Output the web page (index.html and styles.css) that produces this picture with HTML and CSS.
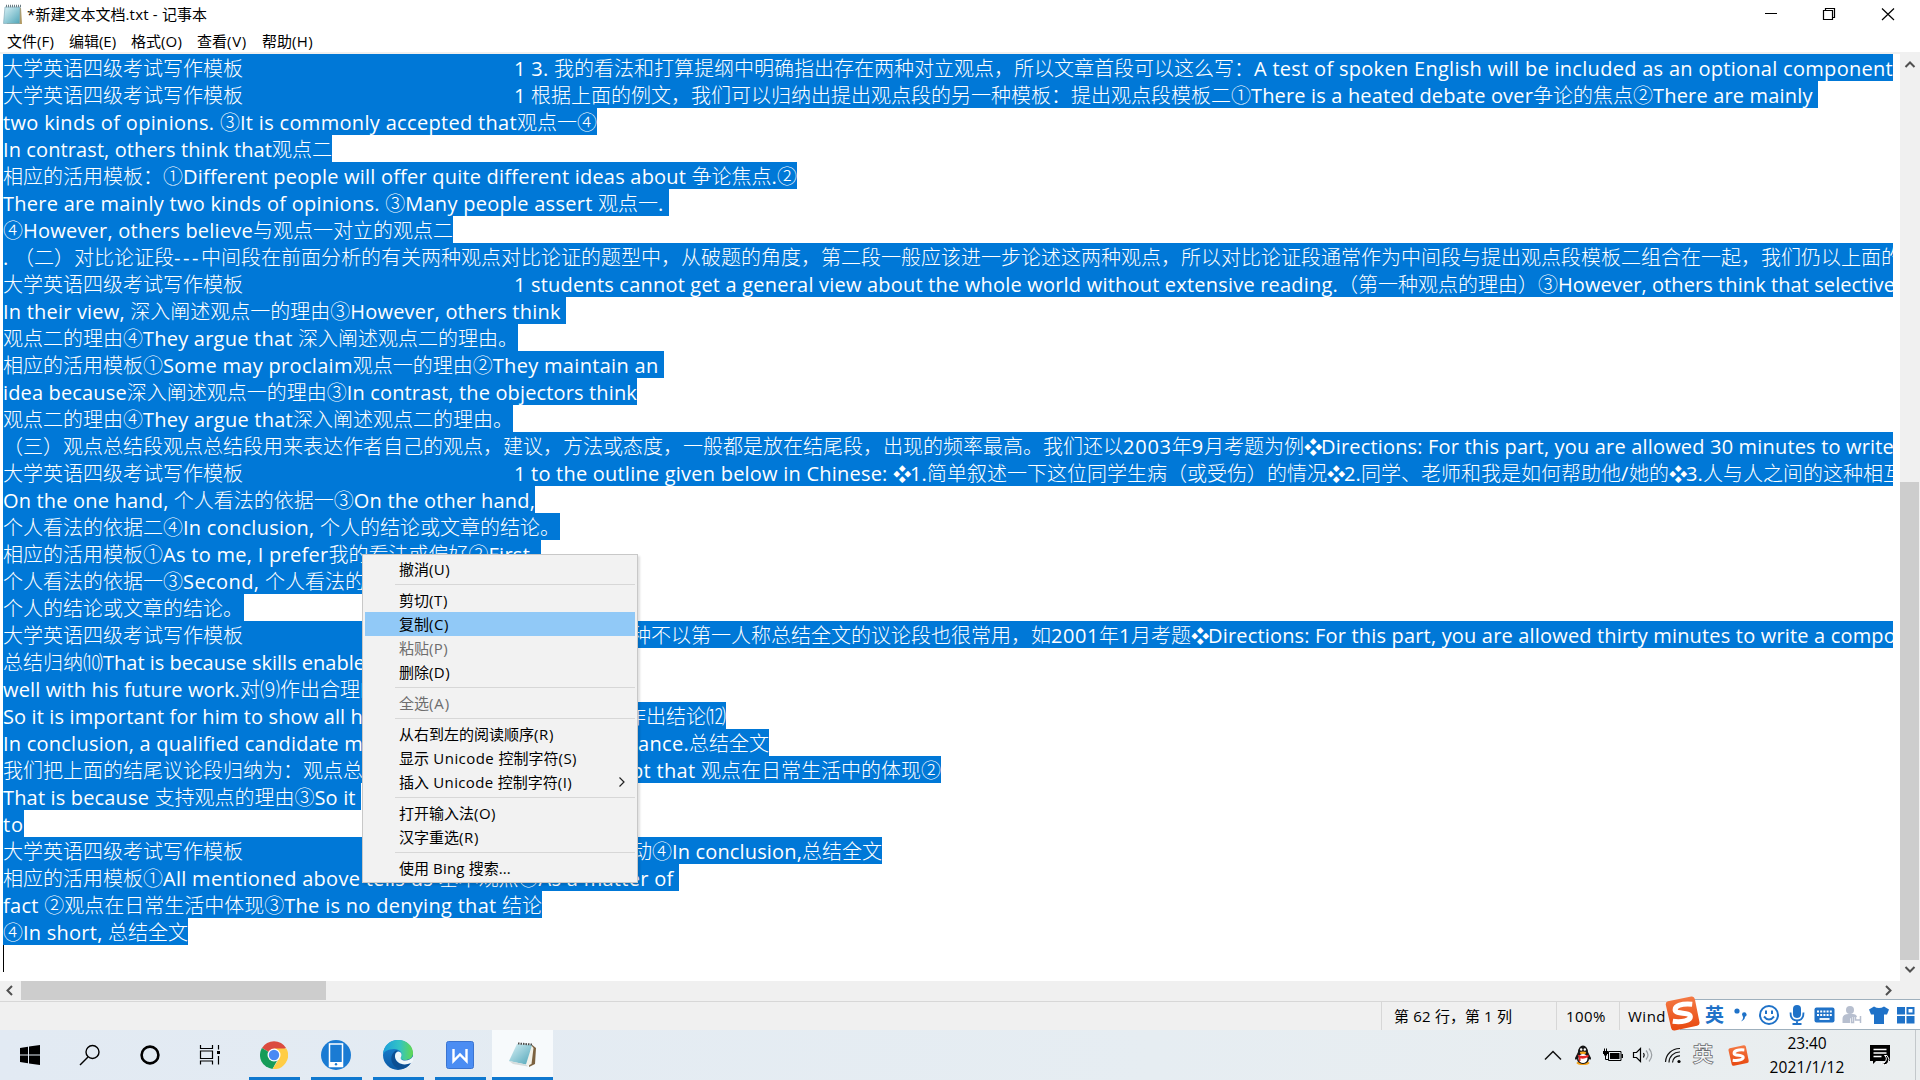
FILE: index.html
```html
<!DOCTYPE html>
<html lang="zh-CN">
<head>
<meta charset="utf-8">
<title>*新建文本文档.txt - 记事本</title>
<link rel="stylesheet" href="styles.css">
</head>
<body>
<svg class="defs" width="0" height="0">
  <defs>
    <linearGradient id="pad" x1="0" y1="0" x2="1" y2="1"><stop offset="0" stop-color="#d9f1f6"/><stop offset="1" stop-color="#4fa5b8"/></linearGradient>
    <linearGradient id="sg" x1="0" y1="0" x2="0" y2="1"><stop offset="0" stop-color="#f47a45"/><stop offset="1" stop-color="#e8480f"/></linearGradient>
    <linearGradient id="edgeTop" x1="0" y1="0" x2="1" y2="0"><stop offset="0" stop-color="#1b9fdc"/><stop offset=".55" stop-color="#33c3c5"/><stop offset="1" stop-color="#62d94f"/></linearGradient>
    <linearGradient id="edgeLow" x1="0" y1="0" x2="0" y2="1"><stop offset="0" stop-color="#1c86d6"/><stop offset="1" stop-color="#0c59a4"/></linearGradient>
    <symbol id="notepad" viewBox="0 0 28 26">
      <path d="M22 2 27 6 26 22 20 25z" fill="#7c6240"/>
      <path d="M22 3 24.500 6 22.500 22 17 24.500z" fill="#f3f1e8"/>
      <path d="M8 2 23 3 17 22.500 0 19z" fill="url(#pad)"/>
      <path d="M17 22.500 19 24.500 4 22 0 19z" fill="#d5dcdc"/>
      <path d="M9 1.500 24 2.600" stroke="#4a4a48" stroke-width="2" stroke-dasharray="1.500 1"/>
    </symbol>
    <symbol id="sogou" viewBox="0 0 36 36">
      <path d="M3 5.500 27 .500q3-.500 3.700 2.500L35.500 27q.500 3-2.500 3.700L10 35.500q-3 .500-3.700-2.500L.800 9Q.500 6 3 5.500z" fill="url(#sg)"/>
      <path d="M28 8.500C17 7.500 10 10 10.500 14.500c.500 4.500 15 2 15.500 6.500.500 4-8.500 6.500-18 5" fill="none" stroke="#fff" stroke-width="5.200"/>
    </symbol>
  </defs>
</svg>

<div class="window">
  <header class="titlebar">
    <svg class="app-icon" width="20" height="21" viewBox="0 0 20 21"><path d="M3 3 18 4 19 20 4 20z" fill="#b29a63"/><path d="M2 3H17L16.500 19.500H.500z" fill="url(#pad)" stroke="#86aebb" stroke-width=".7"/><path d="M3 2H18" stroke="#6b7d84" stroke-width="2.500" stroke-dasharray="1 1"/></svg>
    <span class="title" data-w="180">*新建文本文档.txt - 记事本</span>
    <div class="controls">
      <svg width="60" height="30" viewBox="0 0 60 30"><path d="M25 13.500H37" stroke="#000"/></svg>
      <svg width="60" height="30" viewBox="0 0 60 30"><path d="M23.500 10.500h9v9h-9zM25.500 10.500v-2h9v9h-2" fill="none" stroke="#000" stroke-width="1.200"/></svg>
      <svg width="60" height="30" viewBox="0 0 60 30"><path d="M22 8.500 34 20M34 8.500 22 20" stroke="#000" stroke-width="1.200"/></svg>
    </div>
  </header>
  <nav class="menubar">
    <span data-w="47">文件(F)</span><span data-w="47">编辑(E)</span><span data-w="51">格式(O)</span><span data-w="50">查看(V)</span><span data-w="51">帮助(H)</span>
  </nav>

  <div class="body">
    <main class="text">
      <div class="line"><span data-w="511">大学英语四级考试写作模板</span><span data-w="40">1 3. </span><span>我的看法和打算提纲中明确指出存在两种对立观点，所以文章首段可以这么写：</span><span data-w="639">A test of spoken English will be included as an optional component</span></div>
      <div class="line"><span data-w="511">大学英语四级考试写作模板</span><span data-w="17">1 </span><span>根据上面的例文，我们可以归纳出提出观点段的另一种模板：提出观点段模板二①</span><span data-w="282">There is a heated debate over</span><span>争论的焦点②</span><span data-w="165">There are mainly </span></div>
      <div class="line"><span data-w="594">two kinds of opinions. ③It is commonly accepted that观点一④</span></div>
      <div class="line"><span data-w="329">In contrast, others think that观点二</span></div>
      <div class="line"><span data-w="794">相应的活用模板：①Different people will offer quite different ideas about 争论焦点.②</span></div>
      <div class="line"><span data-w="666">There are mainly two kinds of opinions. ③Many people assert 观点一. </span></div>
      <div class="line"><span data-w="450">④However, others believe与观点一对立的观点二</span></div>
      <div class="line"><span data-w="11">. </span><span data-w="187">（二）对比论证段---</span><span>中间段在前面分析的有关两种观点对比论证的题型中，从破题的角度，第二段一般应该进一步论述这两种观点，所以对比论证段通常作为中间段与提出观点段模板二组合在一起，我们仍以上面的</span></div>
      <div class="line"><span data-w="511">大学英语四级考试写作模板</span><span data-w="824">1 students cannot get a general view about the whole world without extensive reading.</span><span>（第一种观点的理由）③</span><span data-w="337">However, others think that selective</span></div>
      <div class="line"><span data-w="563">In their view, 深入阐述观点一的理由③However, others think </span></div>
      <div class="line"><span data-w="515">观点二的理由④They argue that 深入阐述观点二的理由。</span></div>
      <div class="line"><span data-w="661">相应的活用模板①Some may proclaim观点一的理由②They maintain an </span></div>
      <div class="line"><span data-w="634">idea because深入阐述观点一的理由③In contrast, the objectors think</span></div>
      <div class="line"><span data-w="510">观点二的理由④They argue that深入阐述观点二的理由。</span></div>
      <div class="line"><span>（三）观点总结段观点总结段用来表达作者自己的观点，建议，方法或态度，一般都是放在结尾段，出现的频率最高。我们还以</span><span data-w="101">2003年9月</span><span>考题为例❖</span><span data-w="573">Directions: For this part, you are allowed 30 minutes to write</span></div>
      <div class="line"><span data-w="511">大学英语四级考试写作模板</span><span data-w="379">1 to the outline given below in Chinese: </span><span data-w="374">❖1.简单叙述一下这位同学生病（或受伤）</span><span>的情况❖</span><span data-w="17">2.</span><span data-w="308">同学、老师和我是如何帮助他/她的</span><span>❖</span><span data-w="17">3.</span><span>人与人之间的这种相互</span></div>
      <div class="line"><span data-w="532">On the one hand, 个人看法的依据一③On the other hand,</span></div>
      <div class="line"><span data-w="557">个人看法的依据二④In conclusion, 个人的结论或文章的结论。</span></div>
      <div class="line"><span data-w="538">相应的活用模板①As to me, I prefer我的看法或偏好②First, </span></div>
      <div class="line"><span data-w="362">个人看法的依据一③Second, 个人看法的</span></div>
      <div class="line"><span data-w="241">个人的结论或文章的结论。</span></div>
      <div class="line"><span data-w="628">大学英语四级考试写作模板</span><span>种不以第一人称总结全文的议论段也很常用，如</span><span data-w="80">2001年1</span><span>月考题❖</span><span data-w="688">Directions: For this part, you are allowed thirty minutes to write a compo</span></div>
      <div class="line"><span data-w="362">总结归纳⑽That is because skills enable</span></div>
      <div class="line"><span data-w="377">well with his future work.对⑼作出合理的</span></div>
      <div class="line"><span data-w="623">So it is important for him to show all h<i class="under"></i></span><span>作出结论⑿</span></div>
      <div class="line"><span data-w="635">In conclusion, a qualified candidate m<i class="under"></i></span><span data-w="51">ance.</span><span>总结全文</span></div>
      <div class="line"><span data-w="628">我们把上面的结尾议论段归纳为：观点总</span><span data-w="70">pt that </span><span>观点在日常生活中的体现②</span></div>
      <div class="line"><span data-w="358">That is because 支持观点的理由③So it </span></div>
      <div class="line"><span data-w="21">to</span></div>
      <div class="line"><span data-w="629">大学英语四级考试写作模板</span><span>动④</span><span data-w="130">In conclusion,</span><span>总结全文</span></div>
      <div class="line"><span data-w="676">相应的活用模板①All mentioned above tells us 基本观点②As a matter of </span></div>
      <div class="line"><span data-w="539">fact ②观点在日常生活中体现③The is no denying that 结论</span></div>
      <div class="line"><span data-w="185">④In short, 总结全文</span></div>
      <div class="caret"></div>
    </main>
    <div class="vscroll">
      <svg width="20" height="21" viewBox="0 0 20 21"><path d="M5.500 13 10 8.500 14.500 13" fill="none" stroke="#505050" stroke-width="2"/></svg>
      <div class="vtrack"><div class="vthumb"></div></div>
      <svg width="20" height="21" viewBox="0 0 20 21"><path d="M5.500 7 10 11.500 14.500 7" fill="none" stroke="#505050" stroke-width="2"/></svg>
    </div>
  </div>
  <div class="hscroll">
    <svg width="21" height="20" viewBox="0 0 21 20"><path d="M12 5 7.500 9.500 12 14" fill="none" stroke="#505050" stroke-width="2"/></svg>
    <div class="hthumb"></div>
    <svg class="push" width="21" height="20" viewBox="0 0 21 20"><path d="M8 5 12.500 9.500 8 14" fill="none" stroke="#505050" stroke-width="2"/></svg>
    <div class="corner"></div>
  </div>
  <footer class="status">
    <div class="cell pos"><span data-w="118">第 62 行，第 1 列</span></div>
    <div class="cell zoom"><span data-w="40">100%</span></div>
    <div class="cell eol"><span data-w="38">Wind</span></div>
  </footer>
</div>

<div class="taskbar">
  <div class="task t60"><svg width="22" height="22" viewBox="0 0 22 22"><path d="M1 4 9 2.800V10.500H1zM10 2.600 21 1V10.500H10zM1 11.500H9V19.200L1 18zM10 11.500H21V21L10 19.400z"/></svg></div>
  <div class="task t60"><svg width="22" height="22" viewBox="0 0 22 22"><circle cx="13.500" cy="8" r="6.500" fill="none" stroke="#000" stroke-width="1.400"/><path d="M9 13 1 21" stroke="#000" stroke-width="1.500"/></svg></div>
  <div class="task t60"><svg width="22" height="22" viewBox="0 0 22 22"><circle cx="11" cy="11" r="8.400" fill="none" stroke="#000" stroke-width="2.600"/></svg></div>
  <div class="task tview"><svg width="22" height="22" viewBox="0 0 22 22"><path d="M1.500 1v3.500h12V1M1.500 20.500V17h12v3.500M1.500 7h12v7.500h-12zM19.500 1v4.500M19.500 12v8.500" fill="none" stroke="#000" stroke-width="1.200"/><path d="M18 7h3v3h-3z"/></svg></div>
  <div class="task open"><svg width="28" height="28" viewBox="0 0 28 28"><path d="M14 14 2 7A14 14 0 0 1 26.100 7z" fill="#db4b3f"/><path d="M14 14 1.900 7A14 14 0 0 0 12.500 28L18 18z" fill="#159c58"/><path d="M14 7.500H26.400A14 14 0 0 1 12.500 28L19.500 17z" fill="#ffcd46"/><circle cx="14" cy="14" r="6.500" fill="#fff"/><circle cx="14" cy="14" r="5.200" fill="#4a8af4"/></svg></div>
  <div class="task open"><svg width="30" height="30" viewBox="0 0 30 30"><circle cx="15" cy="15" r="15" fill="#1a7bd3"/><path d="M8.500 4h13v22.500h-13z" fill="#1a7bd3" stroke="#fff" stroke-width="1.500"/><path d="M8.500 22h13v4.500h-13z" fill="#fff"/><circle cx="15" cy="24.300" r="1.200" fill="#1a7bd3"/></svg></div>
  <div class="task open"><svg width="30" height="30" viewBox="0 0 30 30"><circle cx="15" cy="15" r="15" fill="url(#edgeLow)"/><path d="M0 14C1 5 7 0 15 0c9 0 15 6 15 13 0 5-4 7-8 7-3 0-5-1-4-3 2-4-1-8-7-8C5 9 1 12 0 14z" fill="url(#edgeTop)"/><path d="M11 12c-5 5-3 14 5 17 6 0 10-3 12-6-9 4-17-1-16-8 0-2 1-3 3-4-2-1-3 0-4 1z" fill="#0d4f93"/><path d="M15 11.500c3 0 4.500 3 3 5.500-1 2 1 3.500 4 3.500 3.500 0 6-1.500 8-4V21l-2 2c-8 3.500-15 0-16-6-.300-3 1-5 3-5.500z" fill="#eff6fa"/></svg></div>
  <div class="task open"><svg width="28" height="28" viewBox="0 0 28 28"><rect x=".5" y=".5" width="27" height="27" rx="2" fill="#4b8df3" stroke="#3b74d0"/><path d="M7.500 8v12L14 13.500 20.500 20V8" fill="none" stroke="#fff" stroke-width="2.400"/></svg></div>
  <div class="task open active"><svg width="28" height="26"><use href="#notepad"/></svg></div>

  <div class="tray">
    <div class="ti"><svg width="18" height="12" viewBox="0 0 18 12"><path d="M1 10.500 9 2.500 17 10.500" fill="none" stroke="#111" stroke-width="1.500"/></svg></div>
    <div class="ti"><svg width="18" height="20" viewBox="0 0 18 20"><ellipse cx="9" cy="18" rx="6.500" ry="2" fill="#f5a31a"/><path d="M4 7a5 6.500 0 0 1 10 0l3 6c0 2-1 2-2 1a6 5 0 0 1-12 0c-1 1-2 1-2-1z" fill="#151515"/><ellipse cx="9" cy="13.500" rx="4.500" ry="4.500" fill="#fff"/><path d="M3.500 9.500Q9 12.500 14.500 9.500V12Q9 14.500 6.500 13.200V16H4.800V12.500z" fill="#e32626"/><ellipse cx="9" cy="7.800" rx="3.200" ry="1.300" fill="#f5a31a"/><circle cx="7.200" cy="4.500" r="1.200" fill="#fff"/><circle cx="10.800" cy="4.500" r="1.200" fill="#fff"/></svg></div>
    <div class="ti"><svg width="22" height="16" viewBox="0 0 22 16"><path d="M6.500 4.500h12.500v9H6.500z" fill="none" stroke="#000"/><path d="M8 6h9.500v6H8zM19.500 7h1.500v4h-1.500zM1 4h5v3H5v1.500H2V7H1z"/><path d="M2.500 1.500V4M4.500 1.500V4M3.500 8v4.500h3" stroke="#000" fill="none"/></svg></div>
    <div class="ti"><svg width="22" height="20" viewBox="0 0 22 20"><path d="M1.500 7.500h3l4-4v13l-4-4h-3z" fill="none" stroke="#000" stroke-width="1.200"/><path d="M11.500 8q1.500 2 0 4.500" fill="none" stroke="#000" stroke-width="1.200"/><path d="M14 5.500q4 4.500 0 9M17 3.500q5.500 6.500 0 13" fill="none" stroke="#9a9fa3" stroke-width="1.200"/></svg></div>
    <div class="ti"><svg width="18" height="18" viewBox="0 0 18 18"><circle cx="15" cy="15.500" r="1.600"/><path d="M1.500 16A14 14 0 0 1 16 2.500M5 16.500A10.500 10.500 0 0 1 16 6M8.500 16.500A7 7 0 0 1 16 9.800" fill="none" stroke="#111" stroke-width="1.200"/></svg></div>
    <div class="ti ime">英</div>
    <div class="ti last"><svg width="21" height="21"><use href="#sogou"/></svg></div>
    <div class="clock"><span data-w="39">23:40</span><span data-w="75">2021/1/12</span></div>
    <div class="notif"><svg width="22" height="22" viewBox="0 0 22 22"><path d="M1 1h20v16H7l-3 3v-3H1z"/><path d="M4.500 5.500h13M4.500 9h13M4.500 12.500h8" stroke="#fff" stroke-width="1.300"/><path d="M15.500 11.500q4 3-.5 7.500-1.500.800-3 0 3.500 3.500 7 0 2.500-4-1-7.500z" fill="#000" stroke="#fff"/></svg></div>
    <div class="peek"></div>
  </div>
</div>

<div class="context">
  <div class="item"><span data-w="51">撤消(U)</span></div>
  <div class="sep"></div>
  <div class="item"><span data-w="49">剪切(T)</span></div>
  <div class="item hot"><span data-w="50">复制(C)</span></div>
  <div class="item off"><span data-w="49">粘贴(P)</span></div>
  <div class="item"><span data-w="51">删除(D)</span></div>
  <div class="sep"></div>
  <div class="item off"><span data-w="51">全选(A)</span></div>
  <div class="sep"></div>
  <div class="item"><span data-w="155">从右到左的阅读顺序(R)</span></div>
  <div class="item"><span data-w="178">显示 Unicode 控制字符(S)</span></div>
  <div class="item"><span data-w="173">插入 Unicode 控制字符(I)</span><svg class="more" width="8" height="12" viewBox="0 0 8 12"><path d="M1.500 1.500 6 6 1.500 10.500" fill="none" stroke="#222" stroke-width="1.200"/></svg></div>
  <div class="sep"></div>
  <div class="item"><span data-w="97">打开输入法(O)</span></div>
  <div class="item"><span data-w="80">汉字重选(R)</span></div>
  <div class="sep"></div>
  <div class="item"><span data-w="112">使用 Bing 搜索...</span></div>
</div>

<div class="sogou">
  <svg class="logo" width="37" height="35"><use href="#sogou"/></svg>
  <span class="ying">英</span>
  <svg width="31" height="24" viewBox="0 0 31 24"><circle cx="13" cy="8" r="2.600" fill="#1f72c8"/><path d="M18 11.500a2.300 2.300 0 1 1 3 2.300Q21 17 17 18.500 19.500 16 19 14z" fill="#1f72c8"/></svg>
  <svg width="28" height="24" viewBox="0 0 28 24"><circle cx="14" cy="12" r="9" fill="none" stroke="#1f72c8" stroke-width="2"/><path d="M11 7.500v3.500M17 7.500v3.500M9 13.500q5 6 10 0" fill="none" stroke="#1f72c8" stroke-width="2"/></svg>
  <svg width="28" height="24" viewBox="0 0 28 24"><rect x="10" y="2" width="8" height="13" rx="4" fill="#1f72c8"/><path d="M7.500 9.500q0 8 6.500 8t6.500-8M14 17v3M9.500 21h9" fill="none" stroke="#1f72c8" stroke-width="1.800"/></svg>
  <svg width="27" height="24" viewBox="0 0 27 24"><rect x="3.500" y="4.500" width="20" height="15" rx="2" fill="#1f72c8"/><path d="M6 8.500h15.500M6 12h15.500" stroke="#fff" stroke-width="2" stroke-dasharray="2 1.200"/><path d="M8.500 16h10" stroke="#fff" stroke-width="1.800"/></svg>
  <svg width="28" height="24" viewBox="0 0 28 24"><circle cx="12" cy="7" r="4" fill="#b7bfcf"/><path d="M4.500 20v-4q0-5 6-5h4q4 0 4.500 3h-7v6z" fill="#b7bfcf"/><path d="M12.500 12.500h3v7h-2v-5h-1zM17.500 13v4h5M22.500 13v7" fill="none" stroke="#b7bfcf" stroke-width="1.500"/></svg>
  <svg width="26" height="24" viewBox="0 0 26 24"><path d="M8 3.500q5 3 10 0l5 3-2 5h-3v9.500H8V11.500H5l-2-5z" fill="#1f72c8"/></svg>
  <svg width="28" height="24" viewBox="0 0 28 24"><path d="M5 4h8v7.500H5zM5 13h8v7.500H5zM14.500 13h8v7.500h-8z" fill="#1f72c8"/><path d="M15.500 5h6v5.500h-6z" fill="none" stroke="#1f72c8" stroke-width="2"/></svg>
</div>
<script src="fit.js"></script>
</body>
</html>
```
FILE: styles.css
```css
* { box-sizing: border-box; }
body {
  margin: 0;
  width: 1920px;
  height: 1080px;
  overflow: hidden;
  display: flex;
  flex-direction: column;
  background: #fff;
  color: #000;
  font-family: "Open Sans", "Noto Sans CJK SC", sans-serif;
  font-size: 15px;
  text-spacing-trim: space-all;
  font-variant-ligatures: none;
}
svg { display: block; flex: none; }
.defs { position: absolute; }
.window { height: 1030px; display: flex; flex-direction: column; }
[data-w] { display: inline-block; white-space: pre; flex: none; }
.dia { display: inline-block; width: 17px; text-align: center; font-family: "DejaVu Sans", sans-serif; font-size: 18.5px; line-height: 20px; }

.titlebar { height: 30px; display: flex; align-items: center; padding-left: 3px; }
.app-icon { margin-top: -2px; }
.title { margin-left: 4px; height: 30px; line-height: 28px; }
.controls { display: flex; margin-left: auto; }
.menubar { height: 24px; display: flex; gap: 15px; padding-left: 7px; line-height: 22px; border-bottom: 2px solid #f0f0f0; }

.body { height: 927px; display: flex; }
.text { width: 1893px; padding-left: 3px; overflow: hidden; font-size: 20px; }
.line {
  display: flex;
  width: fit-content;
  height: 27px;
  line-height: 29px;
  overflow: hidden;
  white-space: pre;
  color: #fff;
  background: #0078d7;
  font-weight: 300;
}
.line > span { flex: none; height: 27px; }
.latin { font-weight: 400; }
.under { display: inline-block; }
.caret { width: 1px; height: 27px; background: #000; }
.vscroll { width: 20px; margin-left: auto; display: flex; flex-direction: column; background: #f0f0f0; }
.vtrack { flex: 1; padding-top: 407px; }
.vthumb { width: 19px; height: 478px; background: #cdcdcd; }
.hscroll { height: 20px; display: flex; background: #f0f0f0; }
.hthumb { width: 305px; height: 19px; background: #cdcdcd; }
.push { margin-left: auto; }
.corner { width: 21px; }
.status { height: 29px; display: flex; justify-content: flex-end; background: #f0f0f0; border-top: 1px solid #d7d7d7; font-size: 15px; line-height: 28px; }
.cell { border-left: 1px solid #d7d7d7; }
.pos { width: 175px; padding-left: 12px; }
.zoom { width: 63px; padding-left: 9px; }
.eol { width: 301px; padding-left: 8px; }

.taskbar { height: 50px; display: flex; background: linear-gradient(90deg, #e2eaf3, #e6edf2 60%, #eaeeef); }
.task { display: flex; align-items: center; justify-content: center; }
.t60 { width: 60px; }
.tview { width: 63px; padding-right: 3px; }
.open { width: 62px; background: linear-gradient(#0f78cf, #0f78cf) center bottom / 51px 3px no-repeat; }
.active { width: 61px; margin-left: 1px; background: linear-gradient(#0f78cf, #0f78cf) center bottom / 100% 3px no-repeat, #f7fafc; }
.tray { display: flex; margin-left: auto; align-items: center; }
.ti { width: 30px; display: flex; justify-content: center; align-items: center; }
.ime { font-size: 20px; line-height: 30px; color: #f2f4f5; -webkit-text-stroke: 1.5px #66696c; paint-order: stroke; }
.last { margin-left: 5px; }
.clock { width: 107px; display: flex; flex-direction: column; align-items: center; padding-left: 1px; font-size: 15.5px; line-height: 24px; }
.notif { width: 40px; display: flex; justify-content: center; }
.peek { width: 20px; height: 50px; background: linear-gradient(#c3c8cb, #c3c8cb) 15px 0 / 1px 100% no-repeat; }

.context {
  position: absolute;
  left: 362px;
  top: 554px;
  width: 276px;
  height: 329px;
  padding: 2px;
  background: #f2f2f2;
  border: 1px solid #c8c8c8;
  box-shadow: 2px 2px 2px rgba(0, 0, 0, .12);
}
.item { height: 24px; line-height: 24px; padding-left: 34px; display: flex; align-items: center; }
.hot { background: #91c9f7; }
.off { color: #6d6d6d; }
.more { margin-left: auto; margin-right: 9px; }
.sep { height: 7px; margin-left: 30px; background: linear-gradient(#d7d7d7, #d7d7d7) 0 3px / 100% 1px no-repeat; }

.sogou {
  position: absolute;
  left: 1680px;
  top: 999px;
  width: 240px;
  height: 31px;
  display: flex;
  align-items: center;
  padding-left: 25px;
  background: #fff;
  border-top: 1px solid #9fb0bd;
  border-bottom: 1px solid #9fb0bd;
}
.logo { position: absolute; left: -16px; top: -4px; }
.ying { width: 21px; font-size: 19px; font-weight: 700; line-height: 28px; color: #1f72c8; }
```
FILE: fit.js
```js
// Stretches or tightens the Latin runs of a fragment so that it takes its data-w width.
document.querySelectorAll('.line > span:not([data-w]), [data-w]').forEach(function (el) {
  Array.from(el.childNodes).forEach(function (node) {
    if (node.nodeType !== 3) return;
    var box = document.createDocumentFragment();
    node.data.split(/([\x20-\x7e]+|❖)/).forEach(function (part) {
      if (!part) return;
      var run = document.createElement('span');
      run.textContent = part;
      if (part === '❖') run.className = 'dia';
      else if (/[\x20-\x7e]/.test(part)) run.className = 'latin';
      box.appendChild(run);
    });
    node.replaceWith(box);
  });
  if (!el.dataset.w) return;
  var want = Number(el.dataset.w);
  var runs = el.querySelectorAll('.latin');
  var count = 0;
  runs.forEach(function (run) { count += run.textContent.length; });
  var target = el.querySelector('.under') ? 360 : want;
  if (count) {
    var space = (target - el.getBoundingClientRect().width) / count;
    runs.forEach(function (run) { run.style.letterSpacing = space.toFixed(3) + 'px'; });
  }
  el.style.width = want + 'px';
});
```
